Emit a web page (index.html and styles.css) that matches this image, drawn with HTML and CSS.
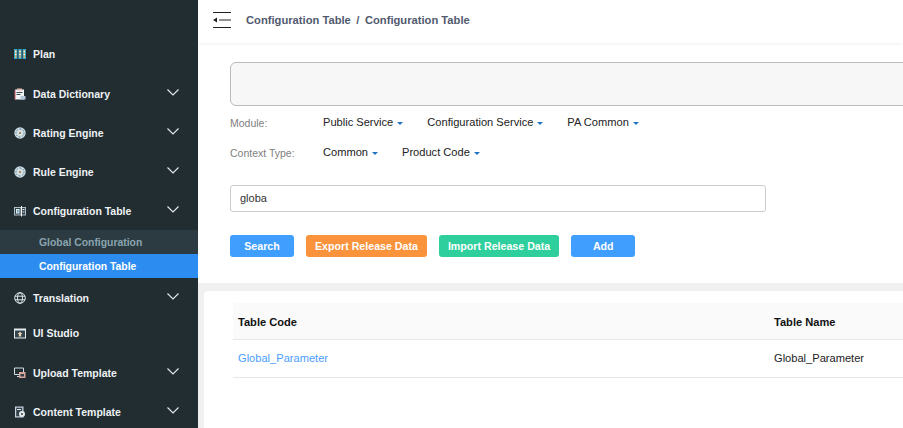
FILE: index.html
```html
<!DOCTYPE html>
<html lang="en">
<head>
<meta charset="utf-8">
<title>Configuration Table</title>
<link rel="stylesheet" href="styles.css">
</head>
<body>
<div class="app">
  <aside class="sidebar">
    <div class="nav-item leaf">
      <svg class="ico" viewBox="0 0 12 12"><path fill="#2fa8cc" d="M0 1h3.400v10H0zM4.300 1h3.400v10H4.300zM8.600 1H12v10H8.600z"/><path fill="#e0b070" d="M1 2h1.400v8H1zM5.300 2h1.400v8H5.300zM9.600 2H11v8H9.600z"/><path fill="#f2f5f6" d="M1 3h1.400v1H1zM1 6h1.400v1H1zM5.300 3h1.400v1H5.300zM5.300 6h1.400v1H5.300zM9.600 3H11v1H9.600zM9.600 6H11v1H9.600z"/></svg>
      <span class="label">Plan</span>
    </div>
    <div class="nav-item">
      <svg class="ico" viewBox="0 0 12 12"><path fill="#f2f4f5" d="M1 1.500h9v10H1z"/><path fill="#c9525c" d="M.5 2h1v9.500h-1z"/><path fill="#e8b9b0" d="M3 .5h5v2H3z"/><path fill="#3a4a52" d="M2.500 4h6v1h-6zM2.500 6h4v1h-4z"/><path fill="#b4c8d8" d="M6.500 8h5v3.500h-5z"/></svg>
      <span class="label">Data Dictionary</span>
      <svg class="chev" viewBox="0 0 12 7"><path d="M.5.500 6 6 11.500.500" fill="none" stroke="#e6ecef" stroke-width="1.100"/></svg>
    </div>
    <div class="nav-item">
      <svg class="ico" viewBox="0 0 12 12"><circle cx="6" cy="6" r="5.700" fill="#cfe0e6"/><path fill="none" stroke="#4a6a86" stroke-dasharray="1.500 1.500" d="M6 2a4 4 0 1 1-.01 0"/><circle cx="6" cy="6" r="2.200" fill="#e9dcc9"/><circle cx="6" cy="6" r=".9" fill="#5a6f7c"/></svg>
      <span class="label">Rating Engine</span>
      <svg class="chev" viewBox="0 0 12 7"><path d="M.5.500 6 6 11.500.500" fill="none" stroke="#e6ecef" stroke-width="1.100"/></svg>
    </div>
    <div class="nav-item">
      <svg class="ico" viewBox="0 0 12 12"><circle cx="6" cy="6" r="5.700" fill="#cfe0e6"/><path fill="none" stroke="#4a6a86" stroke-dasharray="1.500 1.500" d="M6 2a4 4 0 1 1-.01 0"/><circle cx="6" cy="6" r="2.200" fill="#e9dcc9"/><circle cx="6" cy="6" r=".9" fill="#5a6f7c"/></svg>
      <span class="label">Rule Engine</span>
      <svg class="chev" viewBox="0 0 12 7"><path d="M.5.500 6 6 11.500.500" fill="none" stroke="#e6ecef" stroke-width="1.100"/></svg>
    </div>
    <div class="nav-item">
      <svg class="ico" viewBox="0 0 12 12"><path fill="#aebcc4" d="M0 2h12v8.500H0z"/><path fill="#33434b" d="M1 3h5.500v6.500H1zM8 3h3v6.500H8z"/><path fill="#e8eef0" d="M2 4h3.500v4.500H2z"/><path fill="#4fa6c6" d="M3 5h1.500v2.500H3z"/><path fill="#f0f4f5" d="M7 1h1v10.500H7zM8.500 4h2v1h-2zM8.500 6.500h2v1h-2z"/></svg>
      <span class="label">Configuration Table</span>
      <svg class="chev" viewBox="0 0 12 7"><path d="M.5.500 6 6 11.500.500" fill="none" stroke="#e6ecef" stroke-width="1.100"/></svg>
    </div>
    <div class="sub-item">Global Configuration</div>
    <div class="sub-item active">Configuration Table</div>
    <div class="nav-item">
      <svg class="ico" viewBox="0 0 12 12"><g fill="none" stroke="#dce6ea"><circle cx="6" cy="6" r="5.300"/><ellipse cx="6" cy="6" rx="2.500" ry="5.300"/><path d="M1 4.200h10M1 7.800h10"/></g></svg>
      <span class="label">Translation</span>
      <svg class="chev" viewBox="0 0 12 7"><path d="M.5.500 6 6 11.500.500" fill="none" stroke="#e6ecef" stroke-width="1.100"/></svg>
    </div>
    <div class="nav-item leaf">
      <svg class="ico" viewBox="0 0 12 12"><path fill="#e8edef" d="M0 1.500h12v10H0z"/><path fill="#33434b" d="M1 3.500h10v7H1z"/><path fill="#e8d2b8" d="M3.500 7 6 4.800 8.500 7H7.200v2.500H4.800V7z"/></svg>
      <span class="label">UI Studio</span>
    </div>
    <div class="nav-item">
      <svg class="ico" viewBox="0 0 12 12"><path fill="none" stroke="#cfe0e6" d="M.5 1h9v6.500h-9zM3 9.500h3"/><path fill="#d9a59a" d="M5 5h6.500v6H5z"/><path fill="#33434b" d="M6.500 7h3.500v2.500H6.500z"/></svg>
      <span class="label">Upload Template</span>
      <svg class="chev" viewBox="0 0 12 7"><path d="M.5.500 6 6 11.500.500" fill="none" stroke="#e6ecef" stroke-width="1.100"/></svg>
    </div>
    <div class="nav-item">
      <svg class="ico" viewBox="0 0 12 12"><path fill="#c8d6e2" d="M1 .5h8.500v11H1z"/><path fill="#33434b" d="M2.200 1.700h6v8.600h-6z"/><circle cx="8" cy="8" r="3" fill="#e5e9eb"/><circle cx="8" cy="8" r="1" fill="#33434b"/><path fill="#dfe5e8" d="M3 3h4v1H3z"/></svg>
      <span class="label">Content Template</span>
      <svg class="chev" viewBox="0 0 12 7"><path d="M.5.500 6 6 11.500.500" fill="none" stroke="#e6ecef" stroke-width="1.100"/></svg>
    </div>
  </aside>
  <main class="main">
    <header class="topbar">
      <svg class="menu-toggle" viewBox="0 0 18 16"><path d="M0 .5h18M6 8h12M0 15.500h18" stroke="#222" fill="none"/><path d="M0 8l4-2.500v5z" fill="#222"/></svg>
      <nav class="crumbs"><span>Configuration Table</span><span class="sep">/</span><span>Configuration Table</span></nav>
    </header>
    <section class="panel">
      <div class="select-box"></div>
      <div class="filter-row module">
        <span class="filter-label">Module:</span>
        <span class="filter">Public Service<i class="caret"></i></span>
        <span class="filter">Configuration Service<i class="caret"></i></span>
        <span class="filter">PA Common<i class="caret"></i></span>
      </div>
      <div class="filter-row context">
        <span class="filter-label">Context Type:</span>
        <span class="filter">Common<i class="caret"></i></span>
        <span class="filter">Product Code<i class="caret"></i></span>
      </div>
      <div class="search-input">globa</div>
      <div class="actions">
        <button class="btn blue">Search</button>
        <button class="btn orange">Export Release Data</button>
        <button class="btn green">Import Release Data</button>
        <button class="btn blue">Add</button>
      </div>
    </section>
    <section class="card">
      <div class="table">
        <div class="tr head"><div class="td code">Table Code</div><div class="td">Table Name</div></div>
        <div class="tr"><div class="td code"><a class="link">Global_Parameter</a></div><div class="td">Global_Parameter</div></div>
      </div>
    </section>
  </main>
</div>
</body>
</html>
```
FILE: styles.css
```css
* { box-sizing: border-box; }
html, body { margin: 0; height: 100%; overflow: hidden; background: #fff; }
body { font-family: "Liberation Sans", Arial, sans-serif; font-size: 11px; color: #222; }
.app { display: flex; width: 903px; height: 428px; overflow: hidden; }
.sidebar { width: 198px; flex: none; height: 428px; background: #222d32; padding-top: 38px; overflow: hidden; }
.nav-item { height: 39px; display: flex; align-items: center; padding: 0 0 0 14px; color: #eef2f4; font-weight: 700; font-size: 10.5px; }
.nav-item.leaf { height: 36px; padding-bottom: 5px; }
.ico { width: 12px; height: 12px; margin-right: 7px; flex: none; }
.label { flex: 1; }
.chev { width: 12px; height: 7px; margin-right: 19px; margin-bottom: 3px; flex: none; }
.sub-item { height: 24px; line-height: 25px; padding-left: 39px; background: #2c3b41; color: #8aa4af; font-weight: 700; font-size: 10.4px; }
.sub-item.active { background: #2d8cf0; color: #fff; }
.main { flex: 1; min-width: 0; background: #f0f0f0; overflow: hidden; }
.topbar { height: 43px; background: #fff; display: flex; align-items: center; padding-left: 15px; box-shadow: 0 1px 3px rgba(0,0,0,.06); position: relative; }
.menu-toggle { width: 18px; height: 16px; margin-right: 15px; margin-bottom: 3px; }
.crumbs { display: flex; gap: 5.5px; font-weight: 700; font-size: 11.2px; color: #515a6e; margin-bottom: 3px; }
.panel { height: 240px; background: #fff; padding: 19px 0 0 32px; overflow: hidden; }
.select-box { width: 760px; height: 44px; background: #f7f7f7; border: 1px solid #bbb; border-radius: 6px; }
.filter-row { display: flex; align-items: center; font-size: 11.1px; color: #222; gap: 24px; height: 20px; }
.filter-row.module { margin-top: 6px; }
.filter-row.context { margin-top: 10px; }
.filter-label { width: 70px; margin-right: -1px; color: #808080; font-size: 10.5px; padding-top: 2px; white-space: nowrap; }
.filter { display: inline-flex; align-items: center; }
.caret { width: 0; height: 0; margin-left: 4px; margin-top: 2px; border-left: 3px solid transparent; border-right: 3px solid transparent; border-top: 3px solid #2272c4; }
.search-input { width: 536px; height: 27px; margin-top: 23px; padding-left: 9px; line-height: 25px; border: 1px solid #ccc; border-radius: 3px; color: #333; font-size: 11px; }
.actions { display: flex; gap: 12px; margin-top: 23px; }
.btn { height: 22px; min-width: 64px; padding: 0 9px; border: 0; border-radius: 3px; color: #fff; font: 700 10.65px "Liberation Sans", Arial, sans-serif; }
.btn.blue { background: #409eff; }
.btn.orange { background: #fb923c; }
.btn.green { background: #2ecf9c; }
.card { margin: 8px 0 0 6px; height: 140px; background: #fff; border-radius: 4px 0 0 0; padding: 12px 0 0 29px; }
.table { width: 700px; }
.tr { display: flex; height: 38px; align-items: center; padding-bottom: 2px; border-bottom: 1px solid #e8e8e8; font-size: 11.1px; color: #222; }
.tr.head { height: 37px; background: #fafafa; font-weight: 700; color: #111; padding: 1px 0 0; }
.td { padding-left: 5px; }
.td.code { width: 536px; }
.link { color: #4a9eff; }
```
